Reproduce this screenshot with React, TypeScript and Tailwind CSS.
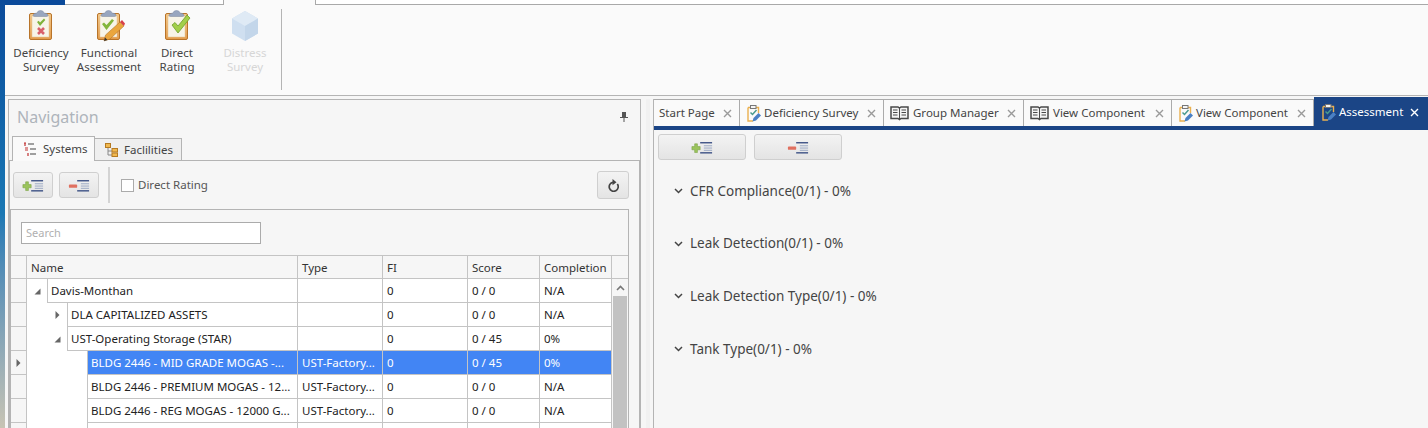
import * as React from 'react';

const Clipboard: React.FC<{ kind: 'survey' | 'pencil' | 'check' }> = ({ kind }) => (
  <svg width="32" height="32" viewBox="0 0 32 32" className="block">
    <defs>
      <linearGradient id="frame" x1="0" y1="0" x2="0" y2="1">
        <stop offset="0" stopColor="#f3c98c" />
        <stop offset="1" stopColor="#e39c4c" />
      </linearGradient>
    </defs>
    <rect x="4.5" y="3.5" width="22" height="26" rx="1.5" fill="url(#frame)" stroke="#b8742a" />
    <rect x="7" y="6" width="17" height="21" fill="#f7f4e8" stroke="#e2c496" strokeWidth="0.5" />
    <path d="M8 5.5 Q8 3 12 3 Q12.5 0.5 15.5 0.5 Q18.5 0.5 19 3 Q23 3 23 5.5 Q23 6.5 21 6.5 H10 Q8 6.5 8 5.5 Z" fill="#98a6bf" stroke="#7c8aa5" strokeWidth="0.5" />
    {kind === 'survey' && (
      <>
        <path d="M12 12 L13.8 10.8 L15 12.5 L19 8.5 L20.3 10 L15 16 Z" fill="#7fb23a" />
        <path d="M13 18 L19 24 M19 18 L13 24" stroke="#d8606a" strokeWidth="2.6" />
      </>
    )}
    {kind === 'pencil' && (
      <>
        <path d="M9 14 L11 12.5 L13.5 15 L19 9 L21 10.5 L13.5 20 Z" fill="#83b63c" />
        <path d="M11 31 L12.5 25 L27 12 L31 16 L17 29 Z" fill="#eaa63e" stroke="#a8681e" strokeWidth="0.5" />
        <path d="M27 12 L29 10 L32 13.5 L31 16 Z" fill="#d8404a" />
        <path d="M11 31 L12 27.5 L14.5 30 Z" fill="#333" />
      </>
    )}
    {kind === 'check' && <path d="M11 15 L14 12.5 L17 16 L26 5 L29 8 L17 23 Z" fill="#a2cf4a" stroke="#6fa02a" strokeWidth="0.8" />}
  </svg>
);

const Cube = () => (
  <svg width="30" height="32" viewBox="0 0 30 32" className="block">
    <path d="M15 1 L28 8.5 V23.5 L15 31 L2 23.5 V8.5 Z" fill="#cfdff0" />
    <path d="M15 1 L28 8.5 L15 16 L2 8.5 Z" fill="#dfeaf5" />
    <path d="M15 16 L28 8.5 V23.5 L15 31 Z" fill="#c3d6ea" />
  </svg>
);

const ExpandIcon: React.FC<{ minus?: boolean }> = ({ minus }) => (
  <svg width="22" height="13" viewBox="0 0 24 14" className="block">
    {minus ? (
      <rect x="1" y="6" width="9" height="3.5" rx="1" fill="#e07060" />
    ) : (
      <path d="M4 3 H7 V6 H10 V9.5 H7 V12.5 H4 V9.5 H1 V6 H4 Z" fill="#9bc45c" stroke="#78a040" strokeWidth="0.6" />
    )}
    <rect x="10" y="1" width="13" height="1.6" fill="#46598a" />
    <rect x="14" y="4.5" width="9" height="1.2" fill="#a4b0c8" />
    <rect x="14" y="7" width="9" height="1.2" fill="#a4b0c8" />
    <rect x="14" y="9.5" width="9" height="1.2" fill="#a4b0c8" />
    <rect x="10" y="12" width="13" height="1.6" fill="#46598a" />
  </svg>
);

const BookIcon = () => (
  <svg width="19" height="16" viewBox="0 0 19 16" className="block" fill="none" stroke="#4a4a4a">
    <path d="M1 2 H8 L9.5 3 L11 2 H18 V13.5 H11 L9.5 14.5 L8 13.5 H1 Z" fill="#f5f5f5" strokeWidth="1.5" />
    <path d="M9.5 3 V14" />
    <path d="M3 5 H7.5 M3 7.5 H7.5 M3 10 H7.5 M11.5 5 H16 M11.5 7.5 H16 M11.5 10 H16" strokeWidth="1" />
  </svg>
);

const SurveyTabIcon = () => (
  <svg width="14" height="17" viewBox="0 0 14 17" className="block">
    <path d="M1 2.5 H11.5 V8 M1 2.5 V16 H6" fill="none" stroke="#eab04f" strokeWidth="1.4" />
    <rect x="3.5" y="0.5" width="5.5" height="3" fill="#f5f5f5" stroke="#777" />
    <path d="M3.5 7.5 L5.5 9.5 L9.5 5" fill="none" stroke="#4a9a8f" strokeWidth="1.5" />
    <path d="M5.5 16.5 L6.5 13 L11.5 8 L14 10.5 L9 15.5 Z" fill="#4a80c4" />
  </svg>
);

const CloseIcon: React.FC<{ white?: boolean }> = ({ white }) => (
  <svg width="9" height="9" viewBox="0 0 9 9" className={`block shrink-0 ${white ? 'mr-[9px]' : 'mr-[7px]'}`}>
    <path d="M1 1 L8 8 M8 1 L1 8" stroke={white ? '#ffffff' : '#9a9a9a'} strokeWidth="1.4" />
  </svg>
);

const Caret: React.FC<{ open?: boolean }> = ({ open }) =>
  open ? (
    <svg width="7" height="7" viewBox="0 0 7 7" className="block">
      <path d="M6.5 0.5 V6.5 H0.5 Z" fill="#666" />
    </svg>
  ) : (
    <svg width="5" height="8" viewBox="0 0 5 8" className="block">
      <path d="M0.5 0 L4.5 4 L0.5 8 Z" fill="#666" />
    </svg>
  );

const ToolButton: React.FC<{ children: React.ReactNode; className: string }> = ({ children, className }) => (
  <div className={`flex items-center justify-center rounded-[3px] border border-[#cfcfcf] bg-gradient-to-b from-[#f3f3f3] to-[#e4e4e4] ${className}`}>
    {children}
  </div>
);

const RibbonItem: React.FC<{ icon: React.ReactNode; label: string; disabled?: boolean; w: string }> = ({ icon, label, disabled, w }) => (
  <div className={`flex flex-col items-center pt-[1px] ${w}`}>
    <div className="h-[32px]">{icon}</div>
    <div className={`mt-[4px] whitespace-pre-line text-center text-[11.5px] leading-[14px] ${disabled ? 'text-[#d6d6d6]' : 'text-[#444]'}`}>{label}</div>
  </div>
);

const DocTab: React.FC<{ label: string; icon?: React.ReactNode; w: string }> = ({ label, icon, w }) => (
  <div className={`flex h-[26px] items-center border-r border-[#ababab] ${w}`}>
    {icon}
    <span className="flex-1 whitespace-nowrap text-[11.5px] text-[#444]">{label}</span>
    <CloseIcon />
  </div>
);

const rows = [
  { depth: 0, name: 'Davis-Monthan', caret: 'open', type: '', fi: '0', score: '0 / 0', done: 'N/A' },
  { depth: 1, name: 'DLA CAPITALIZED ASSETS', caret: 'closed', type: '', fi: '0', score: '0 / 0', done: 'N/A' },
  { depth: 1, name: 'UST-Operating Storage (STAR)', caret: 'open', type: '', fi: '0', score: '0 / 45', done: '0%' },
  { depth: 2, name: 'BLDG 2446 - MID GRADE MOGAS -...', caret: '', type: 'UST-Factory...', fi: '0', score: '0 / 45', done: '0%', selected: true },
  { depth: 2, name: 'BLDG 2446 - PREMIUM MOGAS - 12...', caret: '', type: 'UST-Factory...', fi: '0', score: '0 / 0', done: 'N/A' },
  { depth: 2, name: 'BLDG 2446 - REG MOGAS - 12000 G...', caret: '', type: 'UST-Factory...', fi: '0', score: '0 / 0', done: 'N/A' },
  { depth: 2, name: '', caret: '', type: '', fi: '', score: '', done: '' },
];

const indent = ['w-0', 'w-[20px]', 'w-[60px]'];

const sections = ['CFR Compliance(0/1) - 0%', 'Leak Detection(0/1) - 0%', 'Leak Detection Type(0/1) - 0%', 'Tank Type(0/1) - 0%'];

const App: React.FC = () => {
  return (
    <div className="flex h-[428px] w-[1428px] overflow-hidden bg-[#f6f6f6] font-['Noto_Sans',sans-serif]">
      <div className="w-[5px] shrink-0 bg-gradient-to-b from-[#0b4a9a] via-[#1a78b4] to-[#c8c4b4]" />
      <div className="flex min-w-0 flex-1 flex-col">
        {/* window tabs */}
        <div className="flex h-[5px] shrink-0 bg-[#fafafa]">
          <div className="w-[60px] bg-[#0b4a9a]" />
          <div className="w-[159px] border-b border-r border-[#a9a9a9] bg-white" />
          <div className="w-[91px]" />
          <div className="flex-1 border-b border-l border-[#a9a9a9] bg-white" />
        </div>

        {/* ribbon */}
        <div className="flex h-[91px] shrink-0 items-start border-b border-[#b4b4b4] bg-[#fafafa] pl-[3px] pt-[4px]">
          <RibbonItem w="w-[66px]" icon={<Clipboard kind="survey" />} label={'Deficiency\nSurvey'} />
          <RibbonItem w="w-[70px]" icon={<Clipboard kind="pencil" />} label={'Functional\nAssessment'} />
          <RibbonItem w="w-[66px]" icon={<Clipboard kind="check" />} label={'Direct\nRating'} />
          <RibbonItem w="w-[70px]" icon={<Cube />} label={'Distress\nSurvey'} disabled />
          <div className="ml-[1px] h-[81px] w-px bg-[#b4b4b4]" />
        </div>

        <div className="flex min-h-0 flex-1 pt-[3px]">
          {/* navigation */}
          <div className="ml-[3px] flex w-[633px] shrink-0 flex-col border-l border-r border-t border-[#b4b4b4]">
            <div className="flex h-[36px] shrink-0 items-center justify-between pb-[2px] pl-[8px] pr-[12px]">
              <span className="text-[16px] text-[#aeb4bb]">Navigation</span>
              <svg width="8" height="10" viewBox="0 0 8 10" className="block">
                <path d="M2 0 H6 V5 H8 V6 H4.5 V10 H3.5 V6 H0 V5 H2 Z" fill="#555" />
              </svg>
            </div>
            <div className="flex h-[24px] shrink-0 items-end pl-[3px]">
              <div className="z-10 -mb-px flex h-[25px] w-[83px] items-center gap-[5px] border border-b-0 border-[#b4b4b4] bg-[#fafafa] pl-[10px] text-[11.5px] text-[#444]">
                <svg width="15" height="14" viewBox="0 0 15 14" className="block shrink-0">
                  <path d="M1 1 H3 M2 1 V4" stroke="#c03030" strokeWidth="1.2" />
                  <path d="M5 2 H11 M7 7 H13 M7 12 H13" stroke="#444" strokeWidth="1" />
                  <path d="M2 6 H5 M2 8 H5" stroke="#c03030" strokeWidth="1.2" />
                  <path d="M5 11 V14" stroke="#c03030" strokeWidth="1.2" />
                </svg>
                Systems
              </div>
              <div className="flex h-[22px] w-[87px] items-center gap-[6px] border border-b-0 border-l-0 border-[#b4b4b4] bg-[#efefef] pl-[10px] text-[11.5px] text-[#444]">
                <svg width="13" height="14" viewBox="0 0 13 14" className="block shrink-0">
                  <rect x="0.5" y="0.5" width="5" height="4" fill="#f0b84f" stroke="#b57a22" />
                  <path d="M3 5 V12 H7 M3 8 H7" fill="none" stroke="#888" />
                  <rect x="7" y="5.5" width="5.5" height="3.5" fill="#f0b84f" stroke="#b57a22" />
                  <rect x="7" y="10" width="5.5" height="3.5" fill="#f0b84f" stroke="#b57a22" />
                </svg>
                Faclilities
              </div>
            </div>

            <div className="flex min-h-0 flex-1 flex-col border-l border-r border-t border-[#b4b4b4]">
              {/* toolbar */}
              <div className="flex h-[48px] shrink-0 items-center pr-[10px]">
                <ToolButton className="ml-[3px] h-[26px] w-[40px]">
                  <ExpandIcon />
                </ToolButton>
                <ToolButton className="ml-[6px] h-[26px] w-[40px]">
                  <ExpandIcon minus />
                </ToolButton>
                <div className="ml-[9px] h-[36px] w-[2px] bg-[#d4d4d4]" />
                <div className="ml-[11px] h-[13px] w-[13px] border border-[#ababab] bg-white" />
                <span className="ml-[4px] text-[11.5px] text-[#555]">Direct Rating</span>
                <ToolButton className="ml-auto h-[28px] w-[32px]">
                  <svg width="12" height="13" viewBox="0 0 12 13" className="block" fill="none">
                    <path d="M10.3 5 A4.5 4.5 0 1 1 6 3.3" stroke="#444" strokeWidth="1.7" />
                    <path d="M5.5 0 L9.5 3.2 L5.5 6.2 Z" fill="#444" />
                  </svg>
                </ToolButton>
              </div>

              {/* tree list */}
              <div className="mr-[10px] flex min-h-0 flex-1 flex-col border-l border-r border-t border-[#b4b4b4]">
                <div className="h-[45px] shrink-0 pl-[10px] pt-[12px]">
                  <div className="flex h-[22px] w-[240px] items-center border border-[#ababab] bg-white pl-[4px] text-[11px] text-[#b0b0b0]">Search</div>
                </div>
                <div className="flex h-[24px] shrink-0 border-b border-t border-[#c4c4c4] text-[11.5px] text-[#333]">
                  <div className="w-[16px] shrink-0 border-r border-[#c4c4c4]" />
                  <div className="w-[271px] shrink-0 border-r border-[#c4c4c4] pl-[4px] leading-[24px]">Name</div>
                  <div className="w-[85px] shrink-0 border-r border-[#c4c4c4] pl-[4px] leading-[24px]">Type</div>
                  <div className="w-[85px] shrink-0 border-r border-[#c4c4c4] pl-[4px] leading-[24px]">FI</div>
                  <div className="w-[72px] shrink-0 border-r border-[#c4c4c4] pl-[4px] leading-[24px]">Score</div>
                  <div className="w-[72px] shrink-0 border-r border-[#c4c4c4] pl-[4px] leading-[24px]">Completion</div>
                </div>
                <div className="flex min-h-0 flex-1">
                  <div className="min-w-0 flex-1 overflow-hidden">
                    {rows.map((r, i) => (
                      <div key={i} className="flex h-[24px] text-[11.5px] text-[#222]">
                        <div className="flex w-[16px] shrink-0 items-center justify-center border-b border-r border-[#c4c4c4]">
                          {r.selected && <Caret />}
                        </div>
                        <div className="flex w-[271px] shrink-0">
                          <div className={`shrink-0 bg-white ${indent[r.depth]}`} />
                          {r.depth < 2 && (
                            <div className="flex w-[20px] shrink-0 items-center justify-center bg-white">
                              {r.caret && <Caret open={r.caret === 'open'} />}
                            </div>
                          )}
                          <div className={`flex-1 truncate border-b border-l border-r border-[#c4c4c4] pl-[3px] leading-[23px] ${r.selected ? 'bg-[#4285f4] text-white' : 'bg-white'}`}>
                            {r.name}
                          </div>
                        </div>
                        {[
                          { v: r.type, w: 'w-[85px]' },
                          { v: r.fi, w: 'w-[85px]' },
                          { v: r.score, w: 'w-[72px]' },
                          { v: r.done, w: 'w-[72px]' },
                        ].map((c, j) => (
                          <div
                            key={j}
                            className={`shrink-0 border-b border-r border-[#c4c4c4] pl-[4px] leading-[23px] ${c.w} ${r.selected ? 'bg-[#4285f4] text-white' : 'bg-white'}`}
                          >
                            {c.v}
                          </div>
                        ))}
                      </div>
                    ))}
                  </div>
                  <div className="flex w-[16px] shrink-0 flex-col bg-[#f6f6f6] px-px">
                    <div className="flex h-[17px] items-center justify-center">
                      <svg width="9" height="6" viewBox="0 0 9 6" className="block">
                        <path d="M1 5 L4.5 1.5 L8 5" fill="none" stroke="#777" strokeWidth="1.6" />
                      </svg>
                    </div>
                    <div className="flex-1 bg-[#c2c2c2]" />
                  </div>
                </div>
              </div>
            </div>
          </div>

          {/* splitter */}
          <div className="w-[12px] shrink-0 pl-[5px]">
            <div className="h-full w-[4px] bg-[#f1f1f1]" />
          </div>

          {/* documents */}
          <div className="flex min-w-0 flex-1 flex-col border-l border-[#b4b4b4]">
            <div className="flex h-[31px] shrink-0 items-start border-b-[4px] border-[#1b4586]">
              <div className="flex h-[27px] flex-1 border-t border-[#ababab] bg-[#fafafa]">
                <DocTab w="w-[86px] pl-[5px]" label="Start Page" />
                <DocTab
                  w="w-[144px] pl-[7px]"
                  icon={
                    <div className="w-[17px] shrink-0">
                      <SurveyTabIcon />
                    </div>
                  }
                  label="Deficiency Survey"
                />
                <DocTab
                  w="w-[140px] pl-[6px]"
                  icon={
                    <div className="w-[23px] shrink-0">
                      <BookIcon />
                    </div>
                  }
                  label="Group Manager"
                />
                <DocTab
                  w="w-[148px] pl-[6px]"
                  icon={
                    <div className="w-[23px] shrink-0">
                      <BookIcon />
                    </div>
                  }
                  label="View Component"
                />
                <DocTab
                  w="w-[142px] pl-[7px]"
                  icon={
                    <div className="w-[17px] shrink-0">
                      <SurveyTabIcon />
                    </div>
                  }
                  label="View Component"
                />
                <div className="-mt-[3px] flex h-[32px] flex-1 items-center bg-[#1b4586] pb-[2px] pl-[8px]">
                  <div className="w-[17px] shrink-0">
                    <SurveyTabIcon />
                  </div>
                  <span className="flex-1 text-[11.5px] text-white">Assessment</span>
                  <CloseIcon white />
                </div>
              </div>
            </div>
            <div className="flex shrink-0 gap-[8px] pl-[4px] pt-[4px]">
              <ToolButton className="h-[26px] w-[88px]">
                <ExpandIcon />
              </ToolButton>
              <ToolButton className="h-[26px] w-[88px] from-[#e6e6e6] to-[#dedede]">
                <ExpandIcon minus />
              </ToolButton>
            </div>
            <div className="flex flex-col gap-[30.6px] pl-[20px] pt-[20px]">
              {sections.map((s) => (
                <div key={s} className="flex h-[22px] items-center gap-[7px]">
                  <svg width="9" height="6" viewBox="0 0 9 6" className="block">
                    <path d="M1 1 L4.5 4.5 L8 1" fill="none" stroke="#444" strokeWidth="1.5" />
                  </svg>
                  <span className="text-[13.5px] text-[#444]">{s}</span>
                </div>
              ))}
            </div>
          </div>
        </div>
      </div>
    </div>
  );
};

export default App;
